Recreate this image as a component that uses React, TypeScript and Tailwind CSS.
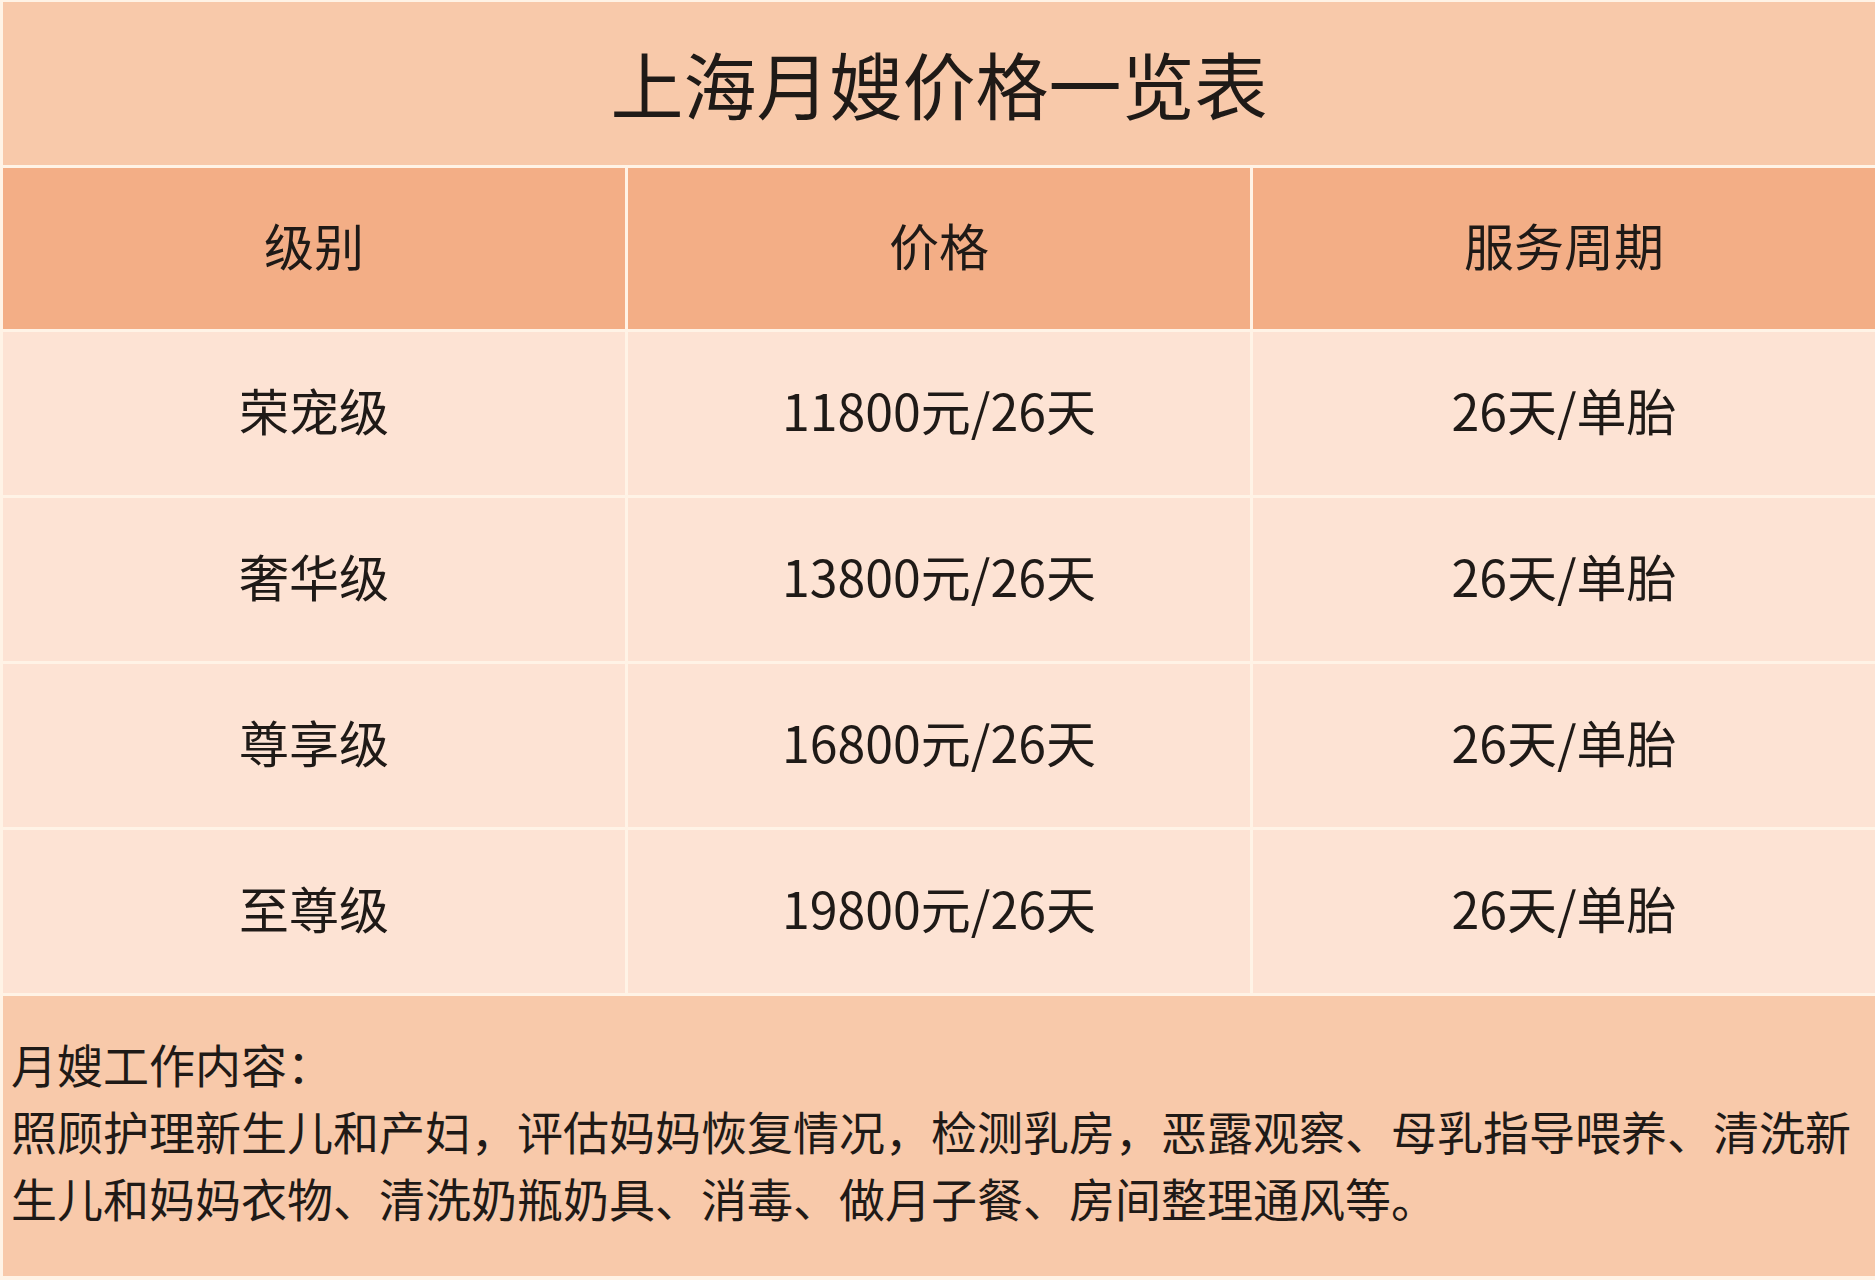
const rows = [
  { level: '荣宠级', price: '11800元/26天', period: '26天/单胎' },
  { level: '奢华级', price: '13800元/26天', period: '26天/单胎' },
  { level: '尊享级', price: '16800元/26天', period: '26天/单胎' },
  { level: '至尊级', price: '19800元/26天', period: '26天/单胎' },
]

const font = { fontFamily: '"Noto Sans CJK SC", "Noto Sans", sans-serif' }

function Cell({ children, header }: { children: React.ReactNode; header?: boolean }) {
  return (
    <div
      className={`flex items-center justify-center pb-[10px] text-[50px] leading-none text-[#1f1a17] ${
        header ? 'bg-[#f3ae86]' : 'bg-[#fde3d4]'
      }`}
    >
      {children}
    </div>
  )
}

export default function App() {
  return (
    <div
      className="w-[1875px] h-[1280px] bg-[#fff3e6] pl-[3px] pt-[2px] pb-[4px] flex flex-col gap-[3px]"
      style={font}
    >
      <div className="h-[163px] shrink-0 bg-[#f8c9aa] flex items-center justify-center pb-[2px]">
        <h1 className="text-[73px] leading-none text-[#1f1a17] font-normal">上海月嫂价格一览表</h1>
      </div>

      <div className="h-[161px] shrink-0 grid grid-cols-3 gap-[3px]">
        <Cell header>级别</Cell>
        <Cell header>价格</Cell>
        <Cell header>服务周期</Cell>
      </div>

      {rows.map((r) => (
        <div key={r.level} className="h-[163px] shrink-0 grid grid-cols-3 gap-[3px]">
          <Cell>{r.level}</Cell>
          <Cell>{r.price}</Cell>
          <Cell>{r.period}</Cell>
        </div>
      ))}

      <div className="flex-1 bg-[#f8c9aa] pl-[8px] pr-[4px] pt-[34px] text-[46px] leading-[67px] text-[#1f1a17]">
        <p>月嫂工作内容：</p>
        <p>
          照顾护理新生儿和产妇，评估妈妈恢复情况，检测乳房，恶露观察、母乳指导喂养、清洗新生儿和妈妈衣物、清洗奶瓶奶具、消毒、做月子餐、房间整理通风等。
        </p>
      </div>
    </div>
  )
}
